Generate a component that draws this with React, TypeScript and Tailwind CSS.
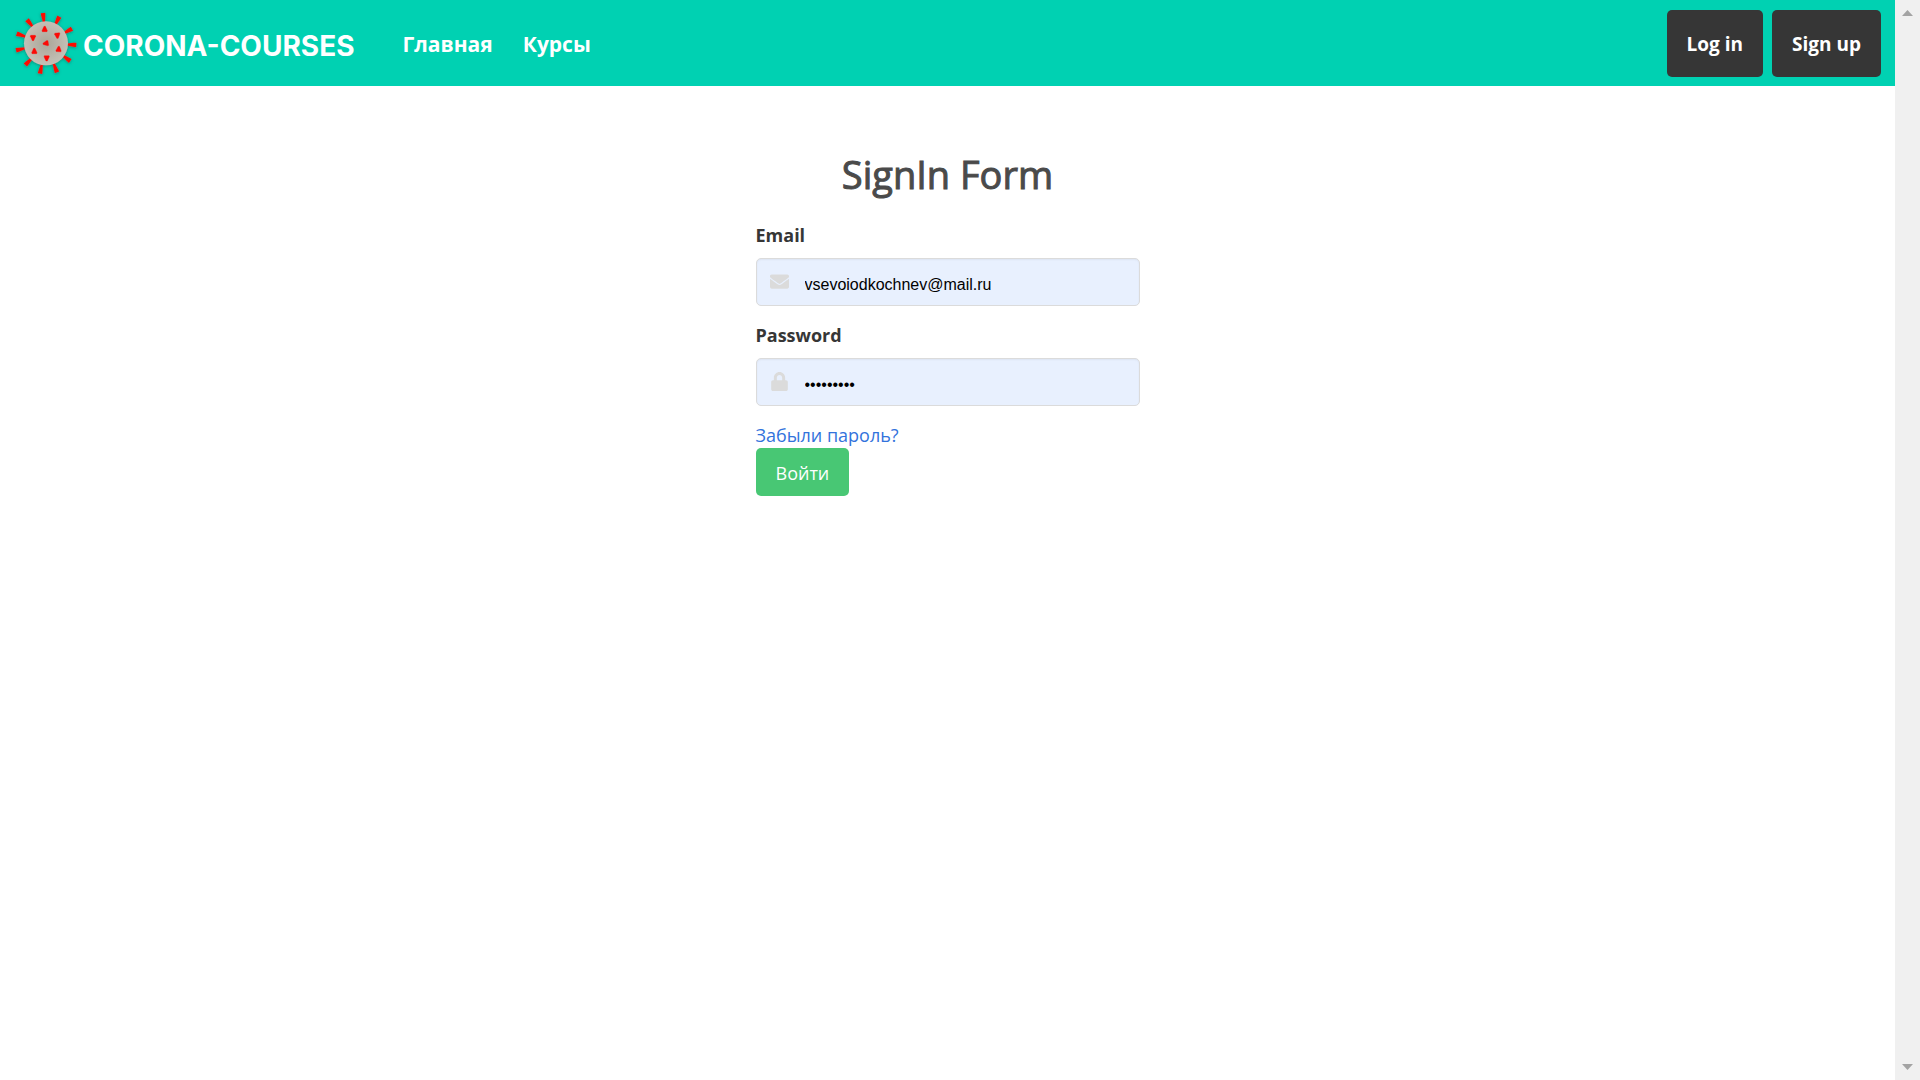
import { useState } from "react";

const spikes = [
  [129, 41], [178, 52], [216, 88], [229, 137], [211, 185], [171, 219],
  [120, 223], [76, 197], [48, 153], [50, 103], [81, 61],
];

const studs = [
  { x: 134, y: 90, r: 0 },
  { x: 172, y: 108, r: 175 },
  { x: 176, y: 150, r: 5 },
  { x: 140, y: 176, r: 180 },
  { x: 103, y: 156, r: 0 },
  { x: 99, y: 115, r: 180 },
  { x: 138, y: 132, r: -100 },
];

function VirusLogo() {
  return (
    <svg viewBox="39 29 198 204" className="h-17 w-[66px] shrink-0" aria-hidden="true">
      <defs>
        <radialGradient id="body">
          <stop offset="0" stopColor="#aaa698" />
          <stop offset="1" stopColor="#c4c0b6" />
        </radialGradient>
        <filter id="shade" x="-20%" y="-20%" width="140%" height="140%">
          <feDropShadow dx="0" dy="2" stdDeviation="5" floodColor="#1c5248" floodOpacity="0.6" />
        </filter>
      </defs>
      <g filter="url(#shade)">
        {spikes.map(([x, y]) => {
          const angle = (Math.atan2(y - 132, x - 138) * 180) / Math.PI + 90;
          return (
            <path
              key={`${x}-${y}`}
              d="M-7 0L7 0L6 10L3 29L-3 29L-6 10Z"
              fill="#fb0a05"
              transform={`translate(${x} ${y}) rotate(${angle})`}
            />
          );
        })}
        <circle cx="138" cy="132" r="66" fill="url(#body)" />
      </g>
      {studs.map((s) => (
        <path
          key={`${s.x}-${s.y}`}
          d="M-2 -9L2 -9L8 4L7 7L-7 7L-8 4Z"
          fill="#fb0a05"
          stroke="#fb0a05"
          strokeWidth="1"
          transform={`translate(${s.x} ${s.y}) rotate(${s.r})`}
        />
      ))}
    </svg>
  );
}

function EnvelopeIcon() {
  return (
    <svg viewBox="0 0 512 512" className="size-[19px]" fill="currentColor" aria-hidden="true">
      <path d="M502.3 190.8c3.9-3.1 9.7-.2 9.7 4.7V400c0 26.5-21.5 48-48 48H48c-26.5 0-48-21.5-48-48V195.6c0-5 5.7-7.8 9.7-4.7 22.4 17.4 52.1 39.5 154.1 113.6 21.1 15.4 56.7 47.8 92.2 47.6 35.7.3 72-32.8 92.3-47.6 102-74.1 131.6-96.3 154-113.7zM256 320c23.2.4 56.6-29.2 73.4-41.4 132.7-96.3 142.8-104.7 173.4-128.7 5.8-4.5 9.2-11.5 9.2-18.9v-19c0-26.5-21.5-48-48-48H48c-26.5 0-48 21.5-48 48v19c0 7.4 3.4 14.3 9.2 18.9 30.6 23.9 40.7 32.4 173.4 128.7 16.8 12.2 50.2 41.8 73.4 41.4z" />
    </svg>
  );
}

function LockIcon() {
  return (
    <svg viewBox="0 0 448 512" className="h-[19px] w-[17px]" fill="currentColor" aria-hidden="true">
      <path d="M400 224h-24v-72C376 68.2 307.8 0 224 0S72 68.2 72 152v72H48c-26.5 0-48 21.5-48 48v192c0 26.5 21.5 48 48 48h352c26.5 0 48-21.5 48-48V272c0-26.5-21.5-48-48-48zm-104 0H152v-72c0-39.7 32.3-72 72-72s72 32.3 72 72v72z" />
    </svg>
  );
}

const inputClass =
  "h-12 w-full rounded-[5px] border border-[#dbdbdb] bg-[#e8f0fe] pt-1.5 pr-3 pl-12 font-['Liberation_Sans',sans-serif] text-base text-black shadow-[inset_0_1px_2px_rgba(10,10,10,0.05)] outline-none";

export default function App() {
  const [email, setEmail] = useState("vsevoiodkochnev@mail.ru");
  const [password, setPassword] = useState("123456789");

  return (
    <div className="flex h-screen bg-white font-['Open_Sans','Noto_Sans',sans-serif] text-lg text-[#4a4a4a]">
      <div className="min-w-0 flex-1">
        <header className="flex items-center justify-between bg-[#00d1b2] py-[9px] pr-3.5 pl-[13px]">
          <nav className="flex items-center text-white">
            <a href="#home" className="flex items-center">
              <VirusLogo />
              <span className="ml-1 pt-1.5 font-['Inter',sans-serif] text-[28px] leading-9 font-bold">
                CORONA-COURSES
              </span>
            </a>
            <a href="#main" className="ml-12 pt-0.5 text-[21px] leading-8 font-bold">Главная</a>
            <a href="#courses" className="ml-[30px] pt-0.5 text-[21px] leading-8 font-bold">Курсы</a>
          </nav>
          <div className="flex gap-[9px] text-[19px] font-bold text-white">
            <button type="button" className="h-[67px] rounded-[5px] bg-[#363636] px-5 pt-1">Log in</button>
            <button type="button" className="h-[67px] rounded-[5px] bg-[#363636] px-5 pt-1">Sign up</button>
          </div>
        </header>

        <main className="mx-auto w-96 pt-16">
          <h1 className="text-center text-[38px] leading-12 font-medium [-webkit-text-stroke:1px_#4a4a4a]">SignIn Form</h1>
          <form className="mt-[23px]" onSubmit={(e) => e.preventDefault()}>
            <label htmlFor="email" className="mb-2 block leading-[29px] font-bold text-[#363636]">Email</label>
            <div className="relative">
              <span className="absolute top-0 left-0 flex size-12 items-center justify-center pb-px text-[#dbdbdb]">
                <EnvelopeIcon />
              </span>
              <input
                id="email"
                type="email"
                className={inputClass}
                value={email}
                onChange={(e) => setEmail(e.target.value)}
              />
            </div>
            <label htmlFor="password" className="mt-[15px] mb-2 block leading-[29px] font-bold text-[#363636]">Password</label>
            <div className="relative">
              <span className="absolute top-0 left-0 flex size-12 items-center justify-center pb-px text-[#dbdbdb]">
                <LockIcon />
              </span>
              <input
                id="password"
                type="password"
                className={inputClass}
                value={password}
                onChange={(e) => setPassword(e.target.value)}
              />
            </div>
            <a href="#forgot" className="mt-4 block leading-[26px] text-[#3273dc]">Забыли пароль?</a>
            <button type="submit" className="h-12 rounded-[5px] bg-[#48c774] px-5 pt-0.5 text-white">Войти</button>
          </form>
        </main>
      </div>
      <div className="flex w-[25px] flex-col items-center justify-between bg-[#f0f0f0] py-2.5 text-[#a3a3a3]" aria-hidden="true">
        <svg viewBox="0 0 11 6" className="h-1.5 w-[11px]" fill="currentColor"><path d="M5.5 0L11 6H0Z" /></svg>
        <svg viewBox="0 0 11 6" className="h-1.5 w-[11px]" fill="currentColor"><path d="M0 0H11L5.5 6Z" /></svg>
      </div>
    </div>
  );
}
